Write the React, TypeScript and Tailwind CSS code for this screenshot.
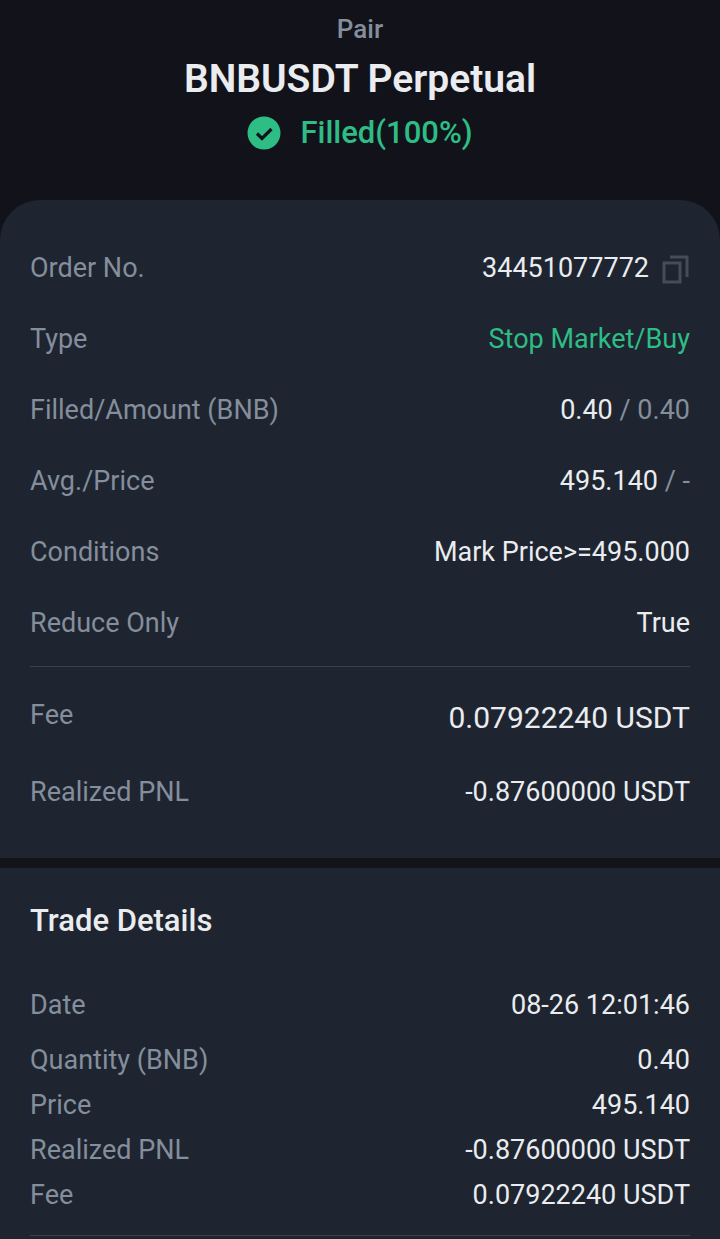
const sans = "font-['Roboto','Liberation_Sans',sans-serif]";

function Row({ label, children, className = 'h-[71px]' }: { label: string; children: React.ReactNode; className?: string }) {
  return (
    <div className={`flex items-center justify-between ${className}`}>
      <span className="text-[27px] text-[#848e9c]">{label}</span>
      <div className="flex items-center text-[27px] text-[#eaecef]">{children}</div>
    </div>
  );
}

function CopyIcon() {
  return (
    <svg width="28" height="30" viewBox="0 0 28 30" fill="none" stroke="#474d57" strokeWidth="3" className="ml-[13px]">
      <rect x="2" y="9" width="16" height="19" />
      <path d="M8 3H25V23" />
    </svg>
  );
}

export default function App() {
  return (
    <div className={`w-[720px] h-[1239px] overflow-hidden bg-[#12131a] ${sans}`}>
      <header className="h-[200px] flex flex-col items-center pt-[12px]">
        <div className="text-[26px] leading-[34px] font-medium text-[#848e9c]">Pair</div>
        <h1 className="mt-[4px] text-[39px] leading-[58px] font-semibold text-[#eaecef]">BNBUSDT Perpetual</h1>
        <div className="mt-[3px] flex items-center">
          <svg width="34" height="34" viewBox="0 0 34 34" className="mr-[19px]">
            <circle cx="17" cy="17" r="16.5" fill="#2ebd85" />
            <path d="M10 17.5L15 22.5L24.5 13" fill="none" stroke="#12131a" strokeWidth="3.2" />
          </svg>
          <span className="text-[31px] leading-[44px] font-medium text-[#2ebd85]">Filled(100%)</span>
        </div>
      </header>

      <section className="h-[658px] bg-[#1e2530] rounded-t-[40px] px-[30px] pt-[33px]">
        <Row label="Order No.">
          <span>34451077772</span>
          <CopyIcon />
        </Row>
        <Row label="Type"><span className="text-[#2ebd85]">Stop Market/Buy</span></Row>
        <Row label="Filled/Amount (BNB)">
          <span>0.40</span>
          <span className="text-[#848e9c] whitespace-pre"> / 0.40</span>
        </Row>
        <Row label="Avg./Price">
          <span>495.140</span>
          <span className="text-[#848e9c] whitespace-pre"> / -</span>
        </Row>
        <Row label="Conditions"><span>Mark Price&gt;=495.000</span></Row>
        <Row label="Reduce Only"><span>True</span></Row>
        <div className="mt-[7px] h-px bg-[#3a414c]" />
        <div className="mt-[13px] flex items-center justify-between h-[75px]">
          <span className="text-[27px] text-[#848e9c] -mt-[4px]">Fee</span>
          <span className="text-[30px] text-[#eaecef]">0.07922240 USDT</span>
        </div>
        <Row label="Realized PNL" className="h-[75px]"><span>-0.87600000 USDT</span></Row>
      </section>

      <div className="h-[10px] bg-[#12141a]" />

      <section className="bg-[#1e2530] h-[371px] px-[30px]">
        <h2 className="pt-[32px] text-[31px] leading-[42px] font-medium text-[#eaecef]">Trade Details</h2>
        <Row label="Date" className="mt-[41px] h-[44px]"><span>08-26 12:01:46</span></Row>
        <Row label="Quantity (BNB)" className="mt-[11px] h-[45px]"><span>0.40</span></Row>
        <Row label="Price" className="h-[45px]"><span>495.140</span></Row>
        <Row label="Realized PNL" className="h-[45px]"><span>-0.87600000 USDT</span></Row>
        <Row label="Fee" className="h-[45px]"><span>0.07922240 USDT</span></Row>
        <div className="mt-[17px] h-px bg-[#3a414c]" />
      </section>
    </div>
  );
}
